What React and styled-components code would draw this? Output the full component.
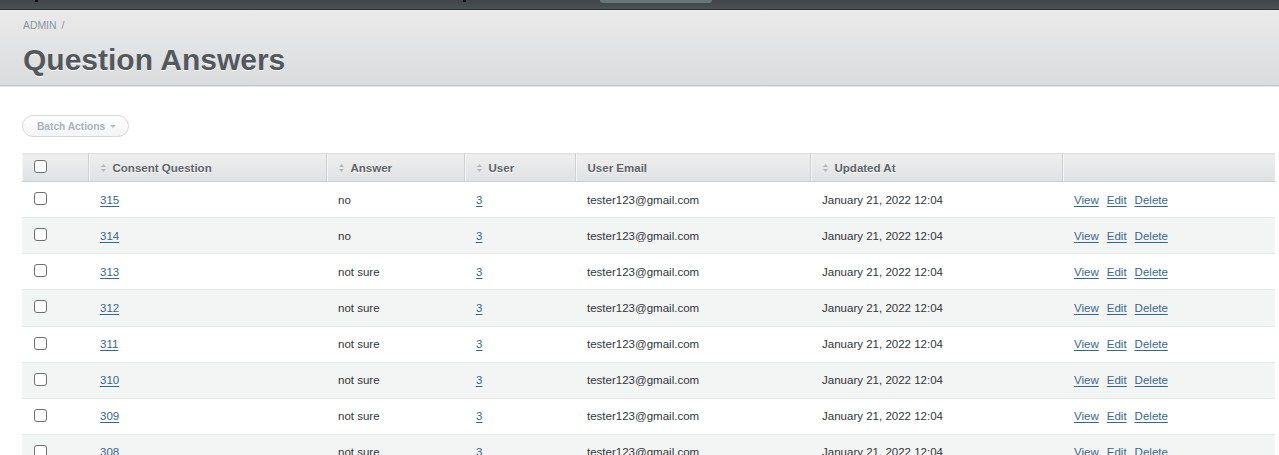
import React from "react";
import styled, { createGlobalStyle } from "styled-components";

const Global = createGlobalStyle`
  html, body { margin: 0; padding: 0; overflow: hidden; background: #fff; }
  body {
    font-family: "Liberation Sans", Arial, Helvetica, sans-serif;
    font-size: 11.52px;
    color: #323537;
  }
`;

const Header = styled.div`
  height: 9px;
  background: linear-gradient(180deg, #3f4549 0%, #4a5155 100%);
  border-bottom: 1px solid #2b3033;
  display: flex;
  align-items: flex-start;
  position: relative;
`;

const NavPill = styled.div`
  margin-left: 600px;
  width: 112px;
  height: 3px;
  background: #6b7578;
  border-radius: 0 0 8px 8px;
`;

const NavMark = styled.span`
  position: absolute;
  top: 0;
  left: ${(p) => p.$x}px;
  width: 3px;
  height: 2px;
  background: #111;
`;

const TitleBar = styled.div`
  background: linear-gradient(180deg, #eaeaea 0%, #dadcdd 100%);
  border-bottom: 1px solid #c4c4c4;
  box-shadow: 0 1px 0 #e6e6e6;
  padding: 9px 22px 7px;
`;

const Crumb = styled.div`
  font-size: 10.4px;
  line-height: 14px;
  color: #8a949e;
  text-transform: uppercase;
  padding-left: 1px;
`;

const Sep = styled.span`
  margin-left: 5px;
`;

const Title = styled.h2`
  margin: 9px 0 0 1px;
  font-size: 30px;
  line-height: 36px;
  font-weight: bold;
  color: #52585d;
  text-shadow: 0 1px 0 #fff;
`;

const Main = styled.div`
  padding: 29px 4px 0 22px;
`;

const BatchButton = styled.div`
  display: inline-flex;
  align-items: center;
  gap: 5px;
  height: 20px;
  padding: 0 12px 0 14px;
  border: 1px solid #d8d8d8;
  border-radius: 12px;
  background: linear-gradient(180deg, #ffffff 0%, #f4f4f4 100%);
  color: #abb3b9;
  font-size: 10.2px;
  font-weight: bold;
`;

const Caret = styled.span`
  width: 0;
  height: 0;
  border-left: 3px solid transparent;
  border-right: 3px solid transparent;
  border-top: 3px solid #b5bcc1;
  margin-top: 1px;
`;

const Table = styled.table`
  margin-top: 16px;
  width: 1253px;
  border-collapse: collapse;
  table-layout: fixed;
`;

const Th = styled.th`
  height: 27px;
  padding: 0 12px;
  text-align: left;
  font-weight: bold;
  font-size: 11.52px;
  color: #5e6469;
  text-shadow: 0 1px 0 #fff;
  background: linear-gradient(180deg, #efefef 0%, #dfe1e2 100%);
  border-top: 1px solid #e4e4e4;
  border-bottom: 1px solid #cdcdcd;
  border-right: 1px solid #d0d0d0;
  box-shadow: inset 1px 0 0 #f6f6f6;
  white-space: nowrap;
  &:last-child { border-right: none; }
`;

const ThInner = styled.span`
  display: inline-flex;
  align-items: center;
  gap: 7px;
`;

const Row = styled.tr`
  background: ${(p) => (p.$alt ? "#f3f4f4" : "#ffffff")};
`;

const Td = styled.td`
  height: 35.14px;
  padding: 0 12px;
  border-bottom: 1px solid #e6e6e6;
  vertical-align: middle;
  white-space: nowrap;
`;

const CheckCell = styled(Td)`
  vertical-align: top;
  padding-top: 10px;
  height: 25.14px;
`;

const CheckTh = styled(Th)`
  vertical-align: top;
  padding-top: 6px;
  height: 21px;
`;

const Box = styled.span`
  display: block;
  width: 11px;
  height: 11px;
  border: 1px solid #6f6f6f;
  border-radius: 3px;
  background: #fff;
`;

const Link = styled.a`
  color: #38678b;
  text-decoration: underline;
  text-underline-offset: 2px;
  cursor: pointer;
`;

const Actions = styled.div`
  display: flex;
  gap: 8px;
`;

const SortIcon = () => (
  <svg width="5" height="8" viewBox="0 0 5 8">
    <path d="M2.5 0 L5 3 L0 3 Z" fill="#b7b7b7" />
    <path d="M2.5 8 L5 5 L0 5 Z" fill="#b7b7b7" />
  </svg>
);

const columns = [
  { label: "", width: 66, check: true },
  { label: "Consent Question", width: 238, sort: true },
  { label: "Answer", width: 138, sort: true },
  { label: "User", width: 111, sort: true },
  { label: "User Email", width: 235 },
  { label: "Updated At", width: 252, sort: true },
  { label: "", width: 213 },
];

const rows = [
  { id: 315, answer: "no" },
  { id: 314, answer: "no" },
  { id: 313, answer: "not sure" },
  { id: 312, answer: "not sure" },
  { id: 311, answer: "not sure" },
  { id: 310, answer: "not sure" },
  { id: 309, answer: "not sure" },
  { id: 308, answer: "not sure" },
];

export default function App() {
  return (
    <>
      <Global />
      <Header>
        <NavMark $x={35} />
        <NavMark $x={463} />
        <NavPill />
      </Header>
      <TitleBar>
        <Crumb>
          Admin<Sep>/</Sep>
        </Crumb>
        <Title>Question Answers</Title>
      </TitleBar>
      <Main>
        <BatchButton>
          Batch Actions <Caret />
        </BatchButton>
        <Table>
          <colgroup>
            {columns.map((c, i) => (
              <col key={i} style={{ width: c.width }} />
            ))}
          </colgroup>
          <thead>
            <tr>
              {columns.map((c, i) =>
                c.check ? (
                  <CheckTh key={i}>
                    <Box />
                  </CheckTh>
                ) : (
                  <Th key={i}>
                    <ThInner>
                      {c.sort && <SortIcon />}
                      {c.label}
                    </ThInner>
                  </Th>
                )
              )}
            </tr>
          </thead>
          <tbody>
            {rows.map((r, i) => (
              <Row key={r.id} $alt={i % 2 === 1}>
                <CheckCell>
                  <Box />
                </CheckCell>
                <Td>
                  <Link>{r.id}</Link>
                </Td>
                <Td>{r.answer}</Td>
                <Td>
                  <Link>3</Link>
                </Td>
                <Td>tester123@gmail.com</Td>
                <Td>January 21, 2022 12:04</Td>
                <Td>
                  <Actions>
                    <Link>View</Link>
                    <Link>Edit</Link>
                    <Link>Delete</Link>
                  </Actions>
                </Td>
              </Row>
            ))}
          </tbody>
        </Table>
      </Main>
    </>
  );
}
